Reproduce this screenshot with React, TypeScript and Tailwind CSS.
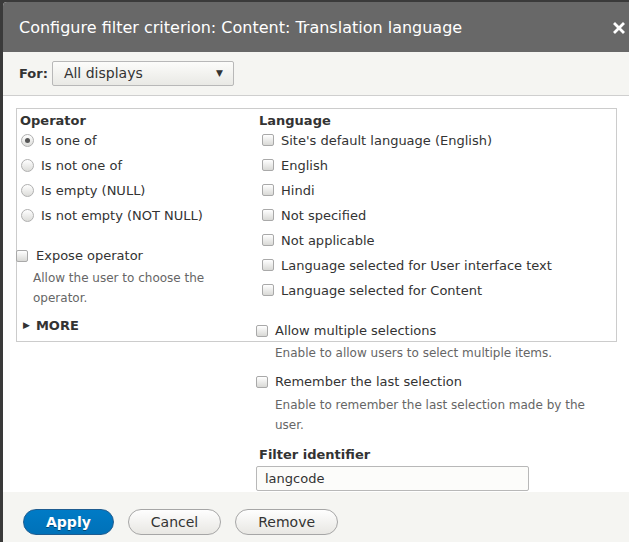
import { ReactNode } from "react";

const Checkbox = () => (
  <span className="inline-block w-[12px] h-[12px] rounded-[2px] border border-[#a9a9a9] bg-gradient-to-b from-[#ffffff] to-[#d9d9d6] shrink-0" />
);

const Radio = ({ checked }: { checked?: boolean }) => (
  <span className="flex items-center justify-center w-[13px] h-[13px] rounded-full border border-[#b0b0b0] bg-gradient-to-b from-[#ffffff] to-[#dcdcd9] shrink-0">
    {checked && <span className="w-[5px] h-[5px] rounded-full bg-[#555]" />}
  </span>
);

const Row = ({ children }: { children: ReactNode }) => (
  <div className="flex items-center h-[25px]">{children}</div>
);

const Button = ({ label, primary }: { label: string; primary?: boolean }) =>
  primary ? (
    <button className="h-[26px] px-[22px] rounded-full bg-gradient-to-b from-[#007bc6] to-[#0071b8] border border-[#1e5c90] text-white text-[14px] font-bold [text-shadow:0_1px_0_rgba(0,0,0,0.4)]">
      {label}
    </button>
  ) : (
    <button className="h-[26px] px-[22px] rounded-full bg-gradient-to-b from-[#fefefe] to-[#e8e7e3] border border-[#a6a6a6] text-[#333] text-[14px]">
      {label}
    </button>
  );

const operators = ["Is one of", "Is not one of", "Is empty (NULL)", "Is not empty (NOT NULL)"];

const languages = [
  "Site's default language (English)",
  "English",
  "Hindi",
  "Not specified",
  "Not applicable",
  "Language selected for User interface text",
  "Language selected for Content",
];

export default function App() {
  return (
    <div className="w-[629px] h-[542px] bg-[#3a3a3a] pl-[3px] pt-[2px] overflow-hidden [font-family:'DejaVu_Sans',sans-serif] text-[#333]">
      <div className="h-full flex flex-col bg-white rounded-tl-[4px] overflow-hidden">
        {/* Title bar */}
        <div className="h-[50px] shrink-0 bg-[#686868] flex items-center justify-between pl-[16px] pr-[4px] pt-[1px]">
          <span className="text-white text-[16px]">Configure filter criterion: Content: Translation language</span>
          <svg width="12" height="12" viewBox="0 0 12 12">
            <path d="M2 2 L10 10 M10 2 L2 10" stroke="#fff" strokeWidth="2.8" strokeLinecap="square" />
          </svg>
        </div>

        {/* For bar */}
        <div className="h-[44px] shrink-0 bg-[#f5f5f2] border-b border-[#cfcfcf] flex items-center pl-[16px]">
          <span className="text-[13px] font-bold mr-[4px]">For:</span>
          <div className="w-[182px] h-[25px] rounded-[2px] border border-[#b8b8b8] bg-gradient-to-b from-[#fcfcfa] to-[#e9e9e5] flex items-center justify-between pl-[11px] pr-[10px]">
            <span className="text-[14px] text-[#333]">All displays</span>
            <span className="text-[9px] text-[#333]">▼</span>
          </div>
        </div>

        {/* Content */}
        <div className="flex-1 pl-[13px] pt-[12px]">
          <div className="w-[601px] h-[234px] border border-[#cccccc] flex">
            {/* Left column */}
            <div className="w-[239px] shrink-0">
              <div className="pl-[3px] pt-[4px]">
                <div className="text-[13px] font-bold leading-[15px]">Operator</div>
                {operators.map((o, i) => (
                  <Row key={o}>
                    <span className="ml-[1px]">
                      <Radio checked={i === 0} />
                    </span>
                    <span className="ml-[7px] text-[13px]">{o}</span>
                  </Row>
                ))}
              </div>
              <div className="mt-[18px] flex items-center h-[20px] -ml-[1px]">
                <Checkbox />
                <span className="ml-[8px] text-[13px]">Expose operator</span>
              </div>
              <div className="mt-[2px] pl-[16px] text-[12px] leading-[20px] text-[#666] w-[200px]">
                Allow the user to choose the operator.
              </div>
              <div className="mt-[9px] flex items-center h-[18px] pl-[6px]">
                <span className="text-[9px] mr-[6px]">▶</span>
                <span className="text-[13px] font-bold">MORE</span>
              </div>
            </div>

            {/* Right column */}
            <div className="flex-1">
              <div className="pl-[3px] pt-[4px]">
                <div className="text-[13px] font-bold leading-[15px]">Language</div>
                {languages.map((l) => (
                  <Row key={l}>
                    <span className="ml-[3px]">
                      <Checkbox />
                    </span>
                    <span className="ml-[7px] text-[13px]">{l}</span>
                  </Row>
                ))}
              </div>
              <div className="mt-[18px] flex items-center h-[20px]">
                <Checkbox />
                <span className="ml-[7px] text-[13px]">Allow multiple selections</span>
              </div>
              <div className="mt-[2px] pl-[19px] text-[12px] leading-[20px] text-[#666]">
                Enable to allow users to select multiple items.
              </div>
              <div className="mt-[9px] flex items-center h-[20px]">
                <Checkbox />
                <span className="ml-[7px] text-[13px]">Remember the last selection</span>
              </div>
              <div className="mt-[3px] pl-[19px] text-[12px] leading-[20px] text-[#666]">
                Enable to remember the last selection made by the user.
              </div>
              <div className="mt-[12px] pl-[3px] text-[13px] font-bold leading-[16px]">Filter identifier</div>
              <div className="mt-[3px] w-[273px] h-[25px] rounded-[2px] border border-[#b8b8b8] bg-[#fcfcfa] flex items-center pl-[8px] text-[13px]">
                langcode
              </div>
            </div>
          </div>
        </div>

        {/* Footer */}
        <div className="h-[50px] shrink-0 bg-[#f5f5f2] flex items-center gap-[14px] pl-[20px] pt-[10px]">
          <Button label="Apply" primary />
          <Button label="Cancel" />
          <Button label="Remove" />
        </div>
      </div>
    </div>
  );
}
